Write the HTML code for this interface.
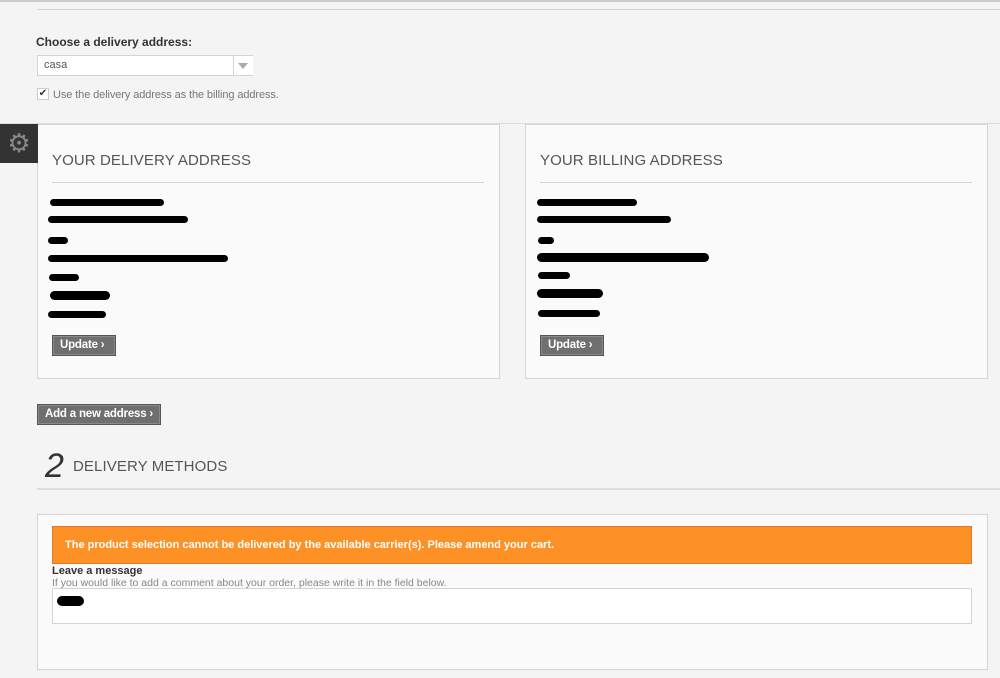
<!DOCTYPE html>
<html><head><style>
body{margin:0;width:1000px;height:678px;background:#f4f4f4;font-family:"Liberation Sans",sans-serif;position:relative;overflow:hidden}
.a{position:absolute}
.box{position:absolute;background:#fafafa;border:1px solid #d6d4d4;box-sizing:border-box}
.h{position:absolute;font-family:"Liberation Sans",sans-serif;font-size:15px;color:#555;letter-spacing:0.1px;white-space:nowrap}
.btn{position:absolute;background:#6f6f6f;border:1px solid #555;box-shadow:inset 0 0 0 1px #8a8a8a;color:#fff;font-weight:bold;font-size:11.5px;line-height:19px;padding:0 7px;box-sizing:border-box;white-space:nowrap;letter-spacing:-0.2px}
.s{position:absolute;background:#000;border-radius:6px;height:7px}
</style></head><body>
<div class="a" style="left:0;top:0;width:1000px;height:2px;background:#ccc"></div>
<div class="a" style="left:37px;top:9px;width:963px;height:1px;background:#d6d4d4"></div>
<div class="a" style="left:36px;top:35px;font-size:12px;font-weight:bold;color:#333">Choose a delivery address:</div>
<div class="a" style="left:37px;top:55px;width:216px;height:21px;border:1px solid #d6d4d4;background:#fff;box-sizing:border-box"></div>
<div class="a" style="left:44px;top:59px;font-size:11px;color:#555">casa</div>
<div class="a" style="left:233px;top:56px;width:19px;height:19px;border-left:1px solid #d6d4d4;background:#fff"></div>
<div class="a" style="left:238px;top:63px;width:0;height:0;border-left:5px solid transparent;border-right:5px solid transparent;border-top:6px solid #aaa"></div>
<div class="a" style="left:37px;top:88px;width:12px;height:12px;border:1px solid #ccc;background:#fff;box-sizing:border-box;font-size:10px;line-height:10px;text-align:center;color:#333">✔</div>
<div class="a" style="left:53px;top:89px;font-size:11px;color:#777;letter-spacing:-0.1px">Use the delivery address as the billing address.</div>
<div class="a" style="left:0;top:123px;width:1000px;height:1px;background:#ddd"></div>
<div class="box" style="left:37px;top:124px;width:463px;height:255px"></div>
<div class="box" style="left:525px;top:124px;width:463px;height:255px"></div>
<div class="a" style="left:0;top:124px;width:38px;height:39px;background:#333;color:#888;font-size:26px;line-height:38px;text-align:center">⚙</div>
<div class="h" style="left:52px;top:152px">YOUR DELIVERY ADDRESS</div>
<div class="h" style="left:540px;top:152px">YOUR BILLING ADDRESS</div>
<div class="a" style="left:52px;top:182px;width:432px;height:1px;background:#d6d4d4"></div>
<div class="a" style="left:540px;top:182px;width:432px;height:1px;background:#d6d4d4"></div>
<div class="s" style="left:50px;top:199px;width:114px"></div>
<div class="s" style="left:48px;top:216px;width:140px"></div>
<div class="s" style="left:48px;top:237px;width:20px"></div>
<div class="s" style="left:48px;top:255px;width:180px"></div>
<div class="s" style="left:49px;top:274px;width:30px"></div>
<div class="s" style="left:50px;top:291px;width:60px;height:9px"></div>
<div class="s" style="left:48px;top:311px;width:58px"></div>
<div class="s" style="left:537px;top:199px;width:100px"></div>
<div class="s" style="left:537px;top:216px;width:134px"></div>
<div class="s" style="left:538px;top:237px;width:16px"></div>
<div class="s" style="left:537px;top:253px;width:172px;height:9px"></div>
<div class="s" style="left:538px;top:272px;width:32px"></div>
<div class="s" style="left:537px;top:289px;width:66px;height:9px"></div>
<div class="s" style="left:538px;top:310px;width:62px"></div>
<div class="btn" style="left:52px;top:335px;width:64px;height:21px">Update ›</div>
<div class="btn" style="left:540px;top:335px;width:64px;height:21px">Update ›</div>
<div class="btn" style="left:37px;top:404px;width:124px;height:21px">Add a new address ›</div>
<div class="a" style="left:45px;top:446px;font-size:34px;font-style:italic;color:#333;font-family:'Liberation Sans',sans-serif;line-height:40px">2</div>
<div class="h" style="left:73px;top:458px">DELIVERY METHODS</div>
<div class="a" style="left:37px;top:488px;width:963px;height:2px;background:#ddd"></div>
<div class="box" style="left:37px;top:514px;width:951px;height:156px"></div>
<div class="a" style="left:52px;top:526px;width:920px;height:38px;background:#fe9126;border:1px solid #e4752b;box-sizing:border-box;color:#fff;font-weight:bold;font-size:11px;line-height:36px;padding-left:12px">The product selection cannot be delivered by the available carrier(s). Please amend your cart.</div>
<div class="a" style="left:52px;top:565px;font-size:11px;font-weight:bold;color:#333">Leave a message</div>
<div class="a" style="left:52px;top:577px;font-size:10.5px;color:#888">If you would like to add a comment about your order, please write it in the field below.</div>
<div class="a" style="left:52px;top:588px;width:920px;height:36px;background:#fff;border:1px solid #d6d4d4;box-sizing:border-box"></div>
<div class="s" style="left:57px;top:596px;width:27px;height:10px"></div>
</body></html>
